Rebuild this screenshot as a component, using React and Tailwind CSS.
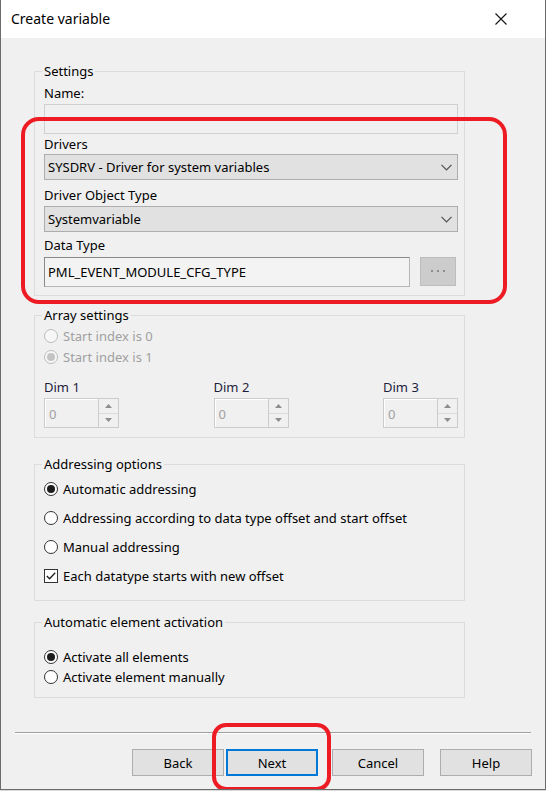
import React from "react";

function Chevron() {
  return (
    <svg width="11" height="7" viewBox="0 0 11 7">
      <path d="M0.5 0.8 L5.5 5.8 L10.5 0.8" fill="none" stroke="#505050" strokeWidth="1.2" />
    </svg>
  );
}

function Group({ title, className = "", children }) {
  return (
    <fieldset className={`w-[431px] ml-[33px] border border-[#dcdcdc] ${className}`}>
      <legend className="-ml-[2px] px-[2px] leading-[16px] text-black">{title}</legend>
      {children}
    </fieldset>
  );
}

function Combo({ value, className = "" }) {
  return (
    <div className={`h-[26px] border border-[#adadad] bg-[#e1e1e1] flex items-center justify-between pl-[3px] pr-[5px] ${className}`}>
      <span className="leading-[16px]">{value}</span>
      <Chevron />
    </div>
  );
}

function Radio({ label, checked = false, disabled = false, className = "" }) {
  return (
    <div className={`flex items-center gap-[5px] ${className}`}>
      <span
        className={`w-[14px] h-[14px] rounded-full border flex items-center justify-center ${
          disabled ? "border-[#bcbcbc] bg-[#f7f7f7]" : "border-[#333333] bg-white"
        }`}
      >
        {checked && (
          <span className={`w-[8px] h-[8px] rounded-full ${disabled ? "bg-[#c4c4c4]" : "bg-[#1c1c1c]"}`} />
        )}
      </span>
      <span className={`leading-[16px] ${disabled ? "text-[#a0a0a0]" : "text-black"}`}>{label}</span>
    </div>
  );
}

function Checkbox({ label, checked = false, className = "" }) {
  return (
    <div className={`flex items-center gap-[5px] ${className}`}>
      <span className="w-[14px] h-[14px] border border-[#333333] bg-white flex items-center justify-center">
        {checked && (
          <svg width="10" height="8" viewBox="0 0 10 8">
            <path d="M0.8 4 L3.6 6.8 L9.2 0.8" fill="none" stroke="#1c1c1c" strokeWidth="1.3" />
          </svg>
        )}
      </span>
      <span className="leading-[16px]">{label}</span>
    </div>
  );
}

function Spinner() {
  return (
    <div className="w-[75px] h-[30px] border border-[#cccccc] bg-[#f0f0f0] flex">
      <div className="flex-1 border-t border-l border-white flex items-center pl-[3px] text-[#a0a0a0] leading-[16px]">0</div>
      <div className="w-[20px] flex flex-col border-l border-[#cccccc]">
        <div className="flex-1 flex items-center justify-center border-b border-[#dadada]">
          <svg width="7" height="4" viewBox="0 0 7 4">
            <path d="M0 4 L3.5 0 L7 4 Z" fill="#8e8e8e" />
          </svg>
        </div>
        <div className="flex-1 flex items-center justify-center">
          <svg width="7" height="4" viewBox="0 0 7 4">
            <path d="M0 0 L3.5 4 L7 0 Z" fill="#8e8e8e" />
          </svg>
        </div>
      </div>
    </div>
  );
}

function Dim({ label }) {
  return (
    <div className="flex flex-col w-[75px]">
      <span className="leading-[16px] text-[#1e1e3c]">{label}</span>
      <div className="mt-[3px]">
        <Spinner />
      </div>
    </div>
  );
}

function Button({ children, primary = false, className = "" }) {
  return (
    <div
      className={`w-[92px] h-[27px] bg-[#e1e1e1] flex items-center justify-center leading-[16px] ${
        primary ? "border-2 border-[#0078d7]" : "border border-[#adadad]"
      } ${className}`}
    >
      {children}
    </div>
  );
}

export default function App() {
  return (
    <div className="w-[546px] h-[791px] bg-[#dadada] font-['Noto_Sans',sans-serif] text-[13px] text-black">
      <div className="relative w-[546px] h-[790px] bg-[#f0f0f0] border-l border-r border-b border-[#6b6b6b] flex flex-col overflow-hidden">
        {/* title bar */}
        <div className="h-[38px] bg-white flex items-center justify-between pl-[10px] pr-[38px] shrink-0">
          <span className="text-[14px] leading-[18px] text-black">Create variable</span>
          <svg width="12" height="12" viewBox="0 0 12 12">
            <path d="M0.5 0.5 L11.5 11.5 M11.5 0.5 L0.5 11.5" stroke="#111111" strokeWidth="1.1" />
          </svg>
        </div>

        {/* Settings */}
        <Group title="Settings" className="mt-[25px] pl-[9px] pr-[6px] pb-[8px]">
          <div className="mt-[6px] leading-[16px]">Name:</div>
          <div className="mt-[3px] h-[30px] border border-[#d0d0d0] bg-[#f0f0f0]" />
          <div className="mt-[2px] leading-[16px]">Drivers</div>
          <Combo className="mt-[2px]" value="SYSDRV - Driver for system variables" />
          <div className="mt-[7px] leading-[16px]">Driver Object Type</div>
          <Combo className="mt-[3px]" value="Systemvariable" />
          <div className="mt-[5px] leading-[16px]">Data Type</div>
          <div className="mt-[4px] flex items-start gap-[10px]">
            <div className="w-[366px] h-[30px] border border-[#8a8a8a] border-b-[#b5b5b5] border-r-[#b5b5b5] bg-[#f3f3f3] flex items-center pl-[3px] leading-[16px]">
              PML_EVENT_MODULE_CFG_TYPE
            </div>
            <div className="w-[36px] h-[29px] border border-[#bdbdbd] bg-[#cccccc] flex items-center justify-center">
              <svg width="14" height="3" viewBox="0 0 14 3">
                <rect x="0" y="0" width="2" height="2" fill="#8c8c8c" />
                <rect x="6" y="0" width="2" height="2" fill="#8c8c8c" />
                <rect x="12" y="0" width="2" height="2" fill="#8c8c8c" />
              </svg>
            </div>
          </div>
        </Group>

        {/* Array settings */}
        <Group title="Array settings" className="mt-[11px] pl-[9px] pr-[6px] pb-[9px]">
          <Radio className="mt-[2px] h-[21px]" label="Start index is 0" disabled />
          <Radio className="h-[21px]" label="Start index is 1" checked disabled />
          <div className="mt-[12px] flex justify-between">
            <Dim label="Dim 1" />
            <Dim label="Dim 2" />
            <Dim label="Dim 3" />
          </div>
        </Group>

        {/* Addressing options */}
        <Group title="Addressing options" className="mt-[18px] pl-[9px] pr-[6px] pb-[14px]">
          <div className="mt-[7px] flex flex-col gap-[9px]">
            <Radio className="h-[20px]" label="Automatic addressing" checked />
            <Radio className="h-[20px]" label="Addressing according to data type offset and start offset" />
            <Radio className="h-[20px]" label="Manual addressing" />
            <Checkbox className="h-[20px]" label="Each datatype starts with new offset" checked />
          </div>
        </Group>

        {/* Automatic element activation */}
        <Group title="Automatic element activation" className="mt-[13px] pl-[9px] pr-[6px] pb-[10px]">
          <div className="mt-[17px] flex flex-col">
            <Radio className="h-[20px]" label="Activate all elements" checked />
            <Radio className="h-[20px]" label="Activate element manually" />
          </div>
        </Group>

        {/* separator */}
        <div className="mt-[34px] ml-[14px] w-[516px] h-[2px] border-t border-[#a0a0a0] border-b border-b-white" />

        {/* buttons */}
        <div className="mt-[15px] flex justify-end pr-[13px]">
          <Button>Back</Button>
          <Button primary className="ml-[2px]">Next</Button>
          <Button className="ml-[14px]">Cancel</Button>
          <Button className="ml-[16px]">Help</Button>
        </div>

        {/* red annotation marks */}
        <div className="pointer-events-none absolute left-[20px] top-[117px] w-[486px] h-[187px] border-4 border-[#ed1c24] rounded-[18px]" />
        <div className="pointer-events-none absolute left-[211px] top-[723px] w-[119px] h-[68px] border-4 border-[#ed1c24] rounded-[14px]" />
      </div>
    </div>
  );
}
